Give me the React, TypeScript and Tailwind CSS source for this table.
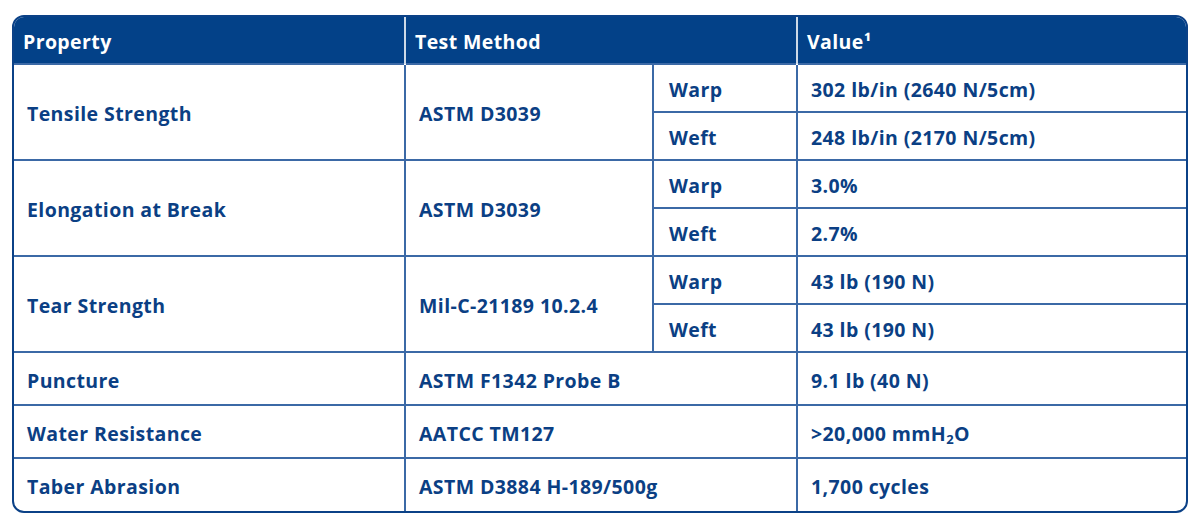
import React from 'react';

type Sub = { dir: string; value: React.ReactNode };
type Row = { property: string; method: string; subs?: Sub[]; value?: React.ReactNode };

const ROWS: Row[] = [
  {
    property: 'Tensile Strength',
    method: 'ASTM D3039',
    subs: [
      { dir: 'Warp', value: '302 lb/in (2640 N/5cm)' },
      { dir: 'Weft', value: '248 lb/in (2170 N/5cm)' },
    ],
  },
  {
    property: 'Elongation at Break',
    method: 'ASTM D3039',
    subs: [
      { dir: 'Warp', value: '3.0%' },
      { dir: 'Weft', value: '2.7%' },
    ],
  },
  {
    property: 'Tear Strength',
    method: 'Mil-C-21189 10.2.4',
    subs: [
      { dir: 'Warp', value: '43 lb (190 N)' },
      { dir: 'Weft', value: '43 lb (190 N)' },
    ],
  },
  { property: 'Puncture', method: 'ASTM F1342 Probe B', value: '9.1 lb (40 N)' },
  {
    property: 'Water Resistance',
    method: 'AATCC TM127',
    value: (
      <>
        &gt;20,000 mmH<sub className="text-[13px] relative top-[3px]">2</sub>O
      </>
    ),
  },
  { property: 'Taber Abrasion', method: 'ASTM D3884 H-189/500g', value: '1,700 cycles' },
];

const line = 'border-[#3b69a6]';

export default function App() {
  return (
    <div className="w-[1195px] h-[520px] bg-white pt-[15px] pl-[12px]" style={{ fontFamily: '"Open Sans", "Noto Sans", sans-serif' }}>
      <div className="w-[1176px] rounded-[12px] border-2 border-[#0b4187] overflow-hidden">
        <table className="w-full table-fixed border-collapse text-[19.5px] font-bold text-[#0b3f84] tracking-[0.4px]">
          <colgroup>
            <col className="w-[391px]" />
            <col className="w-[248px]" />
            <col className="w-[144px]" />
            <col />
          </colgroup>
          <thead>
            <tr className="h-[47px] bg-[#034188] text-white text-left">
              <th className="pl-[9px] pt-[3px] font-bold border-r-2 border-white/80">Property</th>
              <th colSpan={2} className="pl-[9px] pt-[3px] font-bold border-r-2 border-white/80">Test Method</th>
              <th className="pl-[9px] pt-[3px] font-bold">Value¹</th>
            </tr>
          </thead>
          <tbody>
            {ROWS.map((row) =>
              row.subs ? (
                row.subs.map((s, i) => (
                  <tr key={row.property + s.dir} className="h-[48px]">
                    {i === 0 && (
                      <>
                        <td rowSpan={2} className={`pl-[13px] pt-[4px] border-r-2 border-t-2 ${line}`}>{row.property}</td>
                        <td rowSpan={2} className={`pl-[13px] pt-[4px] border-r-2 border-t-2 ${line}`}>{row.method}</td>
                      </>
                    )}
                    <td className={`pl-[15px] pt-[4px] border-r-2 border-t-2 ${line}`}>{s.dir}</td>
                    <td className={`pl-[13px] pt-[4px] border-t-2 ${line}`}>{s.value}</td>
                  </tr>
                ))
              ) : (
                <tr key={row.property} className="h-[53px]">
                  <td className={`pl-[13px] pt-[4px] border-r-2 border-t-2 ${line}`}>{row.property}</td>
                  <td colSpan={2} className={`pl-[13px] pt-[4px] border-r-2 border-t-2 ${line}`}>{row.method}</td>
                  <td className={`pl-[13px] pt-[4px] border-t-2 ${line}`}>{row.value}</td>
                </tr>
              )
            )}
          </tbody>
        </table>
      </div>
    </div>
  );
}
